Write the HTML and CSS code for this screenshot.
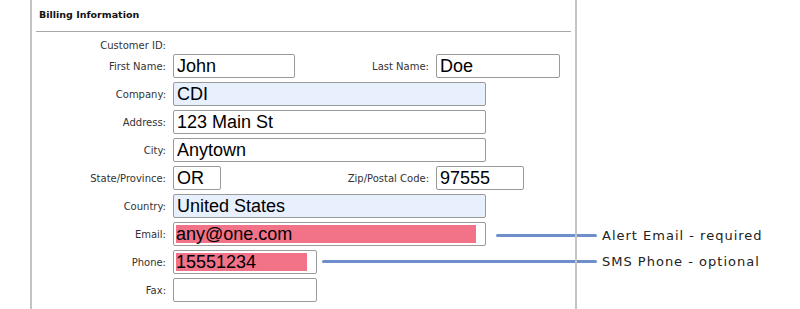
FILE: index.html
```html
<!DOCTYPE html>
<html lang="en">

<head>
    <meta charset="UTF-8">
    <title>Billing Information</title>
    <link rel="stylesheet" href="styles.css">
</head>

<body>

    <div class="page">
        <div class="panel">
            <h3 class="panel-title">Billing Information</h3>
            <div class="rule"></div>

            <div class="row row-short">
                <label class="label">Customer ID:</label>
            </div>
            <div class="row">
                <label class="label">First Name:</label>
                <input class="field w-first" type="text" value="John">
                <label class="label label-2">Last Name:</label>
                <input class="field w-last" type="text" value="Doe">
            </div>
            <div class="row">
                <label class="label">Company:</label>
                <input class="field w-wide filled" type="text" value="CDI">
            </div>
            <div class="row">
                <label class="label">Address:</label>
                <input class="field w-wide" type="text" value="123 Main St">
            </div>
            <div class="row">
                <label class="label">City:</label>
                <input class="field w-wide" type="text" value="Anytown">
            </div>
            <div class="row">
                <label class="label">State/Province:</label>
                <input class="field w-state" type="text" value="OR">
                <label class="label label-state">Zip/Postal Code:</label>
                <input class="field w-zip" type="text" value="97555">
            </div>
            <div class="row">
                <label class="label">Country:</label>
                <input class="field w-wide filled" type="text" value="United States">
            </div>
            <div class="row">
                <label class="label">Email:</label>
                <input class="field w-wide marked" type="text" value="any@one.com">
            </div>
            <div class="row">
                <label class="label">Phone:</label>
                <input class="field w-phone marked" type="text" value="15551234">
            </div>
            <div class="row">
                <label class="label">Fax:</label>
                <input class="field w-phone" type="text" value="">
            </div>
        </div>

        <div class="callout callout-email">
            <span class="callout-line"></span>
            <span class="callout-text">Alert Email - required</span>
        </div>
        <div class="callout callout-phone">
            <span class="callout-line"></span>
            <span class="callout-text">SMS Phone - optional</span>
        </div>
    </div>

</body>

</html>
```

FILE: styles.css
```css
body {
    margin: 0;
    padding: 0;
    background: #fff;
    font-family: 'DejaVu Sans', Verdana, sans-serif;
    color: #222;
}

.page {
    position: relative;
    width: 800px;
    height: 309px;
    overflow: hidden;
}

.panel {
    position: relative;
    z-index: 1;
    margin-left: 30px;
    width: 543px;
    height: 309px;
    border-left: 2px solid #c4c4c4;
    border-right: 2px solid #c4c4c4;
}

.panel-title {
    margin: 0;
    padding: 9px 0 0 7px;
    height: 14px;
    font-size: 9.5px;
    font-weight: bold;
    color: #111;
}

.rule {
    margin: 8px 4px 0 4px;
    height: 1px;
    background: #a8a8a8;
}

.row {
    display: flex;
    align-items: center;
    height: 24px;
    margin-bottom: 4px;
}

.row-short {
    height: 16px;
    margin-top: 5px;
    margin-bottom: 1px;
}

.label {
    width: 134px;
    padding-right: 7px;
    text-align: right;
    font-size: 10px;
    color: #333;
    flex-shrink: 0;
}

.label-2 {
    width: 134px;
}

.label-state {
    width: 208px;
}

.field {
    box-sizing: border-box;
    height: 24px;
    margin: 0;
    padding: 0 3px;
    border: 1px solid #9a9a9a;
    border-radius: 2px;
    font-family: 'Liberation Sans', Arial, sans-serif;
    font-size: 18px;
    color: #000;
    background: #fff;
    outline: none;
}

.filled {
    background: #e8f0fe;
}

.marked {
    padding: 2px 9px 2px 2px;
    background: #f27288;
    background-clip: content-box;
}

.w-first { width: 122px; }
.w-last { width: 124px; }
.w-wide { width: 313px; }
.w-state { width: 48px; }
.w-zip { width: 88px; }
.w-phone { width: 144px; }

.callout {
    position: absolute;
    display: flex;
    align-items: center;
    height: 16px;
}

.callout-email {
    left: 496px;
    top: 227px;
}

.callout-phone {
    left: 322px;
    top: 253px;
}

.callout-line {
    height: 3px;
    border-radius: 2px;
    background: #6f8fcb;
    margin-right: 5px;
}

.callout-email .callout-line { width: 101px; }
.callout-phone .callout-line { width: 275px; }

.callout-text {
    font-size: 13px;
    letter-spacing: 1px;
    color: #222;
    white-space: nowrap;
}
```
